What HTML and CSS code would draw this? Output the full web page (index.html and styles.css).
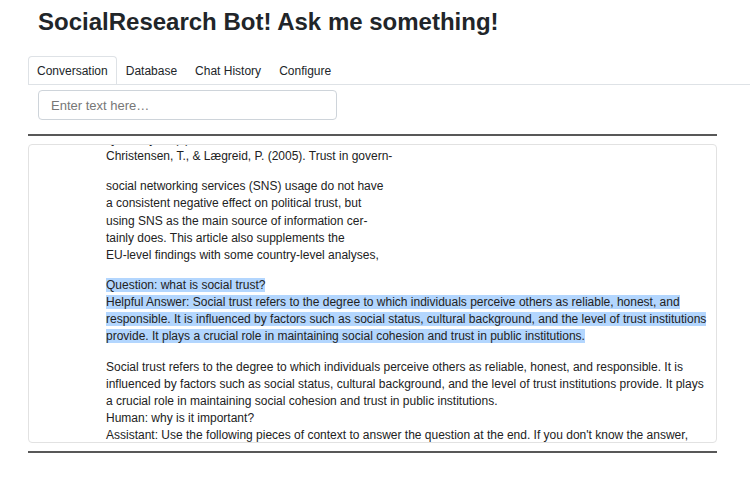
FILE: index.html
```html
<!DOCTYPE html>
<html lang="en">
<head>
<meta charset="utf-8">
<title>SocialResearch Bot</title>
<link rel="stylesheet" href="styles.css">
</head>
<body>
<div class="page">
  <h1 class="title">SocialResearch Bot! Ask me something!</h1>
  <nav class="tabs">
    <a class="tab active">Conversation</a>
    <a class="tab">Database</a>
    <a class="tab">Chat History</a>
    <a class="tab">Configure</a>
  </nav>
  <div class="main">
    <input class="query" type="text" placeholder="Enter text here…">
    <div class="rule"></div>
    <div class="card">
      <div class="content">
        <p>Quarterly, 28(3), 487–511.<br>Christensen, T., &amp; Lægreid, P. (2005). Trust in govern-</p>
        <p>social networking services (SNS) usage do not have<br>a consistent negative effect on political trust, but<br>using SNS as the main source of information cer-<br>tainly does. This article also supplements the<br>EU-level findings with some country-level analyses,</p>
        <p><span class="hl">Question: what is social trust?</span><br><span class="hl">Helpful Answer: Social trust refers to the degree to which individuals perceive others as reliable, honest, and</span><br><span class="hl">responsible. It is influenced by factors such as social status, cultural background, and the level of trust institutions</span><br><span class="hl">provide. It plays a crucial role in maintaining social cohesion and trust in public institutions.</span></p>
        <p>Social trust refers to the degree to which individuals perceive others as reliable, honest, and responsible. It is<br>influenced by factors such as social status, cultural background, and the level of trust institutions provide. It plays<br>a crucial role in maintaining social cohesion and trust in public institutions.<br>Human: why is it important?<br>Assistant: Use the following pieces of context to answer the question at the end. If you don't know the answer,</p>
      </div>
    </div>
    <div class="rule rule-bottom"></div>
  </div>
</div>
</body>
</html>
```
FILE: styles.css
```css
* { box-sizing: border-box; }
html, body {
  margin: 0;
  padding: 0;
  background: #fff;
}
body {
  font-family: "Liberation Sans", Arial, sans-serif;
  color: #212529;
  font-size: 12px;
}
.page {
  padding-left: 28px;
}
.title {
  margin: 0;
  padding: 7px 0 0 10px;
  font-size: 24px;
  line-height: 29px;
  font-weight: bold;
  color: #212529;
}
.tabs {
  display: flex;
  margin-top: 20px;
  border-bottom: 1px solid #dee2e6;
}
.tab {
  display: block;
  padding: 6px 8px 4px;
  line-height: 17px;
  font-size: 12px;
  color: #212529;
  border: 1px solid transparent;
  border-bottom: none;
  border-radius: 4px 4px 0 0;
}
.tab.active {
  border-color: #dee2e6;
  background: #fff;
}
.main {
  width: 689px;
  display: flex;
  flex-direction: column;
  align-items: flex-start;
}
.query {
  margin: 5px 0 0 10px;
  width: 299px;
  height: 30px;
  border: 1px solid #ced4da;
  border-radius: 4px;
  padding: 0 12px;
  font-family: "Liberation Sans", Arial, sans-serif;
  font-size: 13px;
  color: #212529;
  outline: none;
}
.query::placeholder {
  color: #777;
}
.rule {
  margin-top: 14px;
  width: 100%;
  height: 2px;
  background: #585858;
}
.rule-bottom {
  margin-top: 8px;
}
.card {
  margin-top: 8px;
  width: 100%;
  height: 299px;
  border: 1px solid #e2e2e2;
  border-radius: 4px;
  overflow: hidden;
  padding-left: 77px;
}
.content {
  margin-top: -14px;
  font-size: 12px;
  line-height: 17.14px;
  color: #222;
}
.content p {
  margin: 0 0 13px;
  white-space: nowrap;
}
.hl {
  background: #b3d6fe;
}
```
